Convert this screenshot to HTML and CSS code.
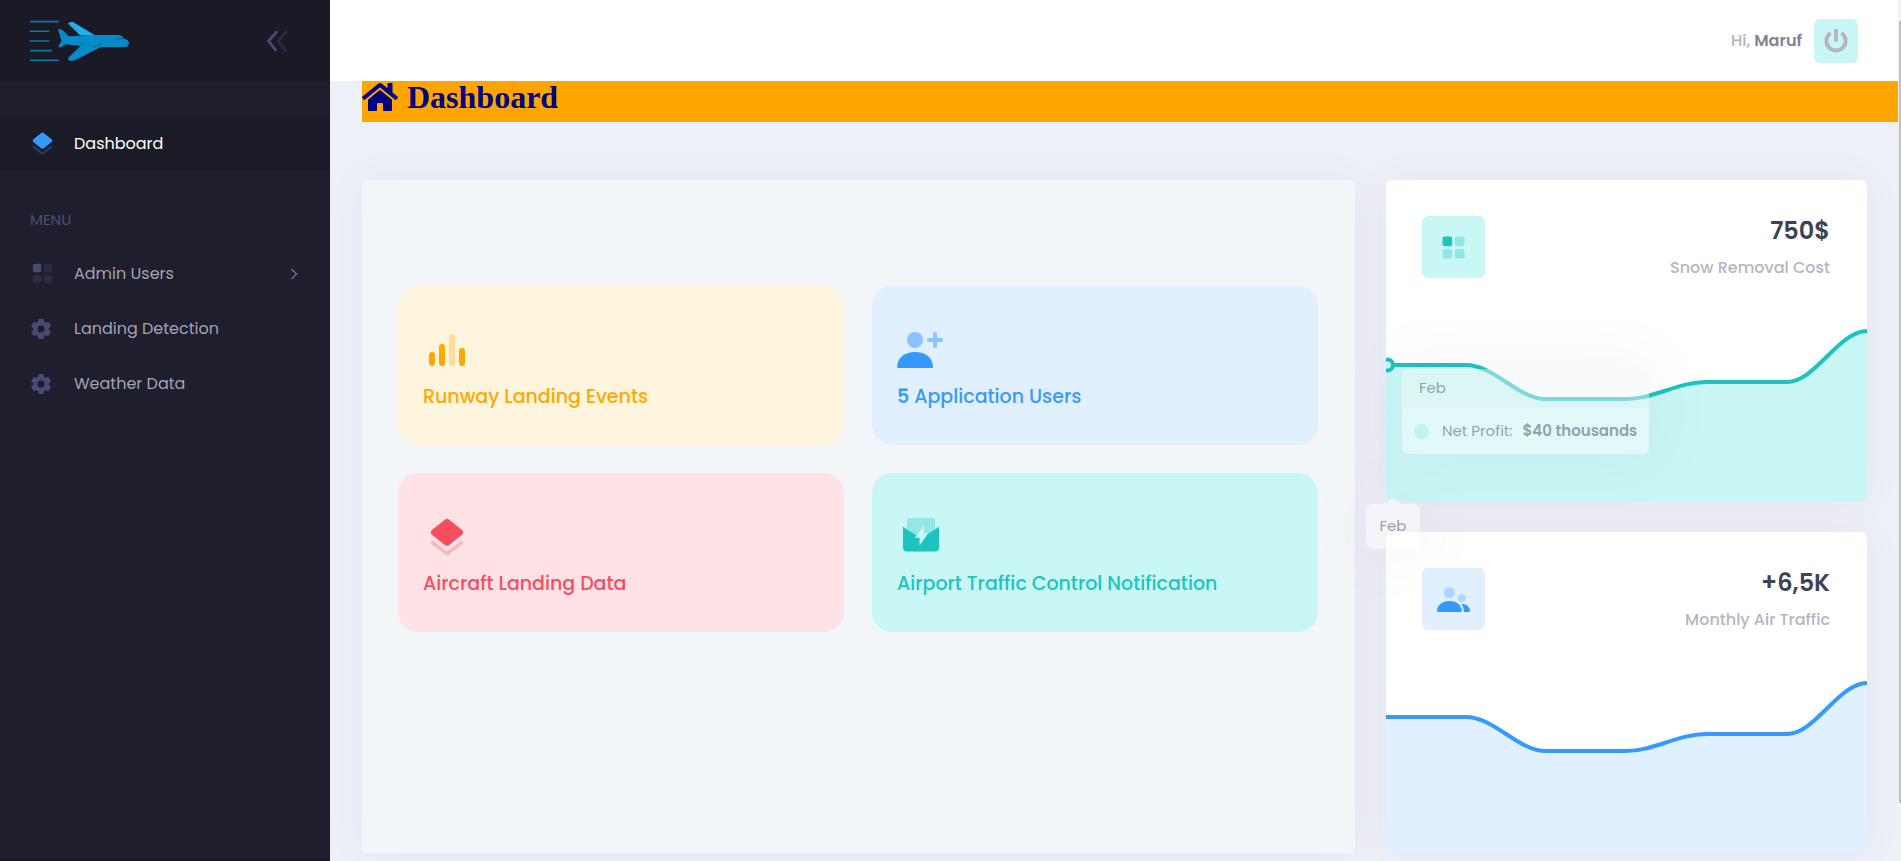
FILE: index.html
```html
<!DOCTYPE html>
<html lang="en">
<head>
<meta charset="utf-8">
<title>Dashboard</title>
<link rel="stylesheet" href="styles.css">
</head>
<body>
<svg class="defs" aria-hidden="true">
  <symbol id="layers" viewBox="0 0 24 24">
    <path d="M12.93 16.07 19.52 10.83C20.17 10.32 20.28 9.37 19.76 8.72 19.69 8.63 19.61 8.55 19.52 8.48L12.93 3.24C12.39 2.81 11.61 2.81 11.07 3.24L4.47 8.48C3.83 9 3.72 9.94 4.23 10.59 4.3 10.68 4.39 10.76 4.47 10.83L11.07 16.07C11.61 16.51 12.39 16.51 12.93 16.07Z"/>
    <path opacity=".3" d="M11.06 18.67 5.34 14.12C4.95 13.81 4.38 13.88 4.07 14.27 3.75 14.67 3.83 15.24 4.22 15.55L11.09 20.8C11.63 21.21 12.37 21.21 12.91 20.8L19.77 15.56C20.17 15.25 20.25 14.68 19.94 14.28 19.63 13.87 19.05 13.8 18.66 14.11L12.92 18.67C12.38 19.1 11.6 19.1 11.06 18.67Z"/>
  </symbol>
  <symbol id="blocks" viewBox="0 0 24 24">
    <rect x="4" y="4" width="7" height="7" rx="1.5"/>
    <g opacity=".3"><rect x="13" y="4" width="7" height="7" rx="1.5"/><rect x="4" y="13" width="7" height="7" rx="1.5"/><rect x="13" y="13" width="7" height="7" rx="1.5"/></g>
  </symbol>
  <symbol id="gear" viewBox="0 0 20 20">
    <circle cx="10" cy="10" r="5.7" fill="none" stroke="currentColor" stroke-width="4.4"/>
    <g id="teeth"><rect x="7.2" y="0" width="5.6" height="4.5" rx="1"/><rect x="7.2" y="15.5" width="5.6" height="4.5" rx="1"/></g>
    <use href="#teeth" transform="rotate(60 10 10)"/>
    <use href="#teeth" transform="rotate(120 10 10)"/>
  </symbol>
</svg>

<div class="layout">
  <aside class="sidebar">
    <div class="brand">
      <svg class="logo" viewBox="0 0 100 42" role="img" aria-label="Airplane">
        <path d="M0 1.6H29M0 11.3H19M0 21H19M0 30.6H22M0 40.3H29" fill="none" stroke="#0b78a8" stroke-width="1.6"/>
        <path fill="#1fb0f0" d="M38 3.5Q38.5 1.5 43 2L65 15.2H50Z"/>
        <path fill="#038cc8" d="M28 9.2Q30.5 8.4 33 10.5L39 16.3 48 16 58 15 89 15Q92 15.3 94 18.5L97.5 20Q101 24.5 96.5 26.9L71 26.9 45 40.3Q40 41.7 38 39.8L38.5 37.5 50.5 26 36 24.3 30.5 27.3 28 27 31.5 20.8Z"/>
        <path d="M85 18.8H93.5M71.5 23 63 27.5M53 22.5 49 26.5" fill="none" stroke="#0a567c" stroke-width=".8"/>
      </svg>
      <button class="collapse" aria-label="Collapse menu">
        <svg width="22" height="22" viewBox="0 0 22 22" fill="none" stroke="#494b74" stroke-width="2.8" stroke-linecap="round" stroke-linejoin="round">
          <path d="M10.5 2 2.5 11 9.7 20"/><path opacity=".35" d="M20 2 12 11 19.2 20"/>
        </svg>
      </button>
    </div>
    <nav class="menu">
      <a class="item active" href="#"><svg class="ico"><use href="#layers"/></svg>Dashboard</a>
      <h2 class="section">MENU</h2>
      <a class="item" href="#"><svg class="ico"><use href="#blocks"/></svg>Admin Users
        <svg class="arrow" width="8" height="12" viewBox="0 0 8 12" fill="none" stroke="#696b90" stroke-width="1.5"><path d="M1.5 1 6.5 6 1.5 11"/></svg></a>
      <a class="item" href="#"><span class="ico"><svg class="gear"><use href="#gear"/></svg></span>Landing Detection</a>
      <a class="item" href="#"><span class="ico"><svg class="gear"><use href="#gear"/></svg></span>Weather Data</a>
    </nav>
  </aside>

  <div class="page">
    <header class="topbar">
      <span class="hello">Hi, <strong>Maruf</strong></span>
      <button class="power" aria-label="Log out">
        <svg width="24" height="24" viewBox="0 0 24 24" fill="none" stroke="#b5b5c3" stroke-width="4" stroke-linecap="round"><path d="M5.2 5.1A9.6 9.6 0 1 0 18.8 5.100M12 1.500V11"/></svg>
      </button>
    </header>

    <main class="main">
      <h1 class="banner">
        <svg width="36" height="32" viewBox="0 0 576 512" fill="currentColor"><path d="M280.37 148.26L96 300.11V464a16 16 0 0 0 16 16l112.06-.29a16 16 0 0 0 15.92-16V368a16 16 0 0 1 16-16h64a16 16 0 0 1 16 16v95.64a16 16 0 0 0 16 16.05L464 480a16 16 0 0 0 16-16V300L295.67 148.26a12.19 12.19 0 0 0-15.3 0zM571.6 251.47L488 182.56V44.05a12 12 0 0 0-12-12h-56a12 12 0 0 0-12 12v72.61L318.47 43a48 48 0 0 0-61 0L4.34 251.47a12 12 0 0 0-1.6 16.9l25.5 31A12 12 0 0 0 45.15 301l235.22-193.74a12.19 12.19 0 0 1 15.3 0L530.9 301a12 12 0 0 0 16.9-1.6l25.5-31a12 12 0 0 0-1.7-16.93z"/></svg>
        Dashboard
      </h1>

      <div class="grid">
        <section class="card overview">
          <div class="tiles">
            <div class="tile warning">
              <svg class="tile-ico" viewBox="0 0 24 24"><rect opacity=".3" x="13" y="4" width="3" height="16" rx="1.5"/><rect x="8" y="9" width="3" height="11" rx="1.5"/><rect x="18" y="11" width="3" height="9" rx="1.5"/><rect x="3" y="13" width="3" height="7" rx="1.5"/></svg>
              <a href="#">Runway Landing Events</a>
            </div>
            <div class="tile primary">
              <svg class="tile-ico" viewBox="0 0 24 24"><g opacity=".5"><circle cx="9" cy="7" r="4"/><path d="M16 7H22M19 4V10" stroke="currentColor" stroke-width="2" stroke-linecap="round"/></g><path d="M0 20.2C.39 15.43 4.26 13 8.98 13 13.77 13 17.7 15.29 18 20.2 18.01 20.4 18 21 17.25 21H.73C.48 21-.02 20.46 0 20.2Z"/></svg>
              <a href="#"><strong>5</strong> Application Users</a>
            </div>
            <div class="tile danger">
              <svg class="tile-ico"><use href="#layers"/></svg>
              <a href="#">Aircraft Landing Data</a>
            </div>
            <div class="tile success">
              <svg class="tile-ico" viewBox="0 0 24 24"><path opacity=".3" d="M5 14V3.5Q5 2.5 6 2.5H18Q19 2.5 19 3.5V14Z"/><path d="M3 6.9 12 12.6 21 6.9V17.2Q21 19.2 19 19.2H5Q3 19.2 3 17.2Z"/><path fill="#c9f7f5" d="M13.5 6.3V10.1H15.6L11.3 16.2V12.4H8.9Z"/></svg>
              <a href="#">Airport Traffic Control Notification</a>
            </div>
          </div>
        </section>

        <div class="stats">
          <section class="card stat">
            <div class="stat-head">
              <span class="symbol success"><svg><use href="#blocks"/></svg></span>
              <div class="figures"><span class="value">750$</span><span class="label">Snow Removal Cost</span></div>
            </div>
            <svg class="chart success" viewBox="0 0 481 185" preserveAspectRatio="none">
              <path class="area" d="M0 49H80C108 49 132 83 160 83H240C268 83 292 66 320 66H401C429 66 453 15 481 15V186H0Z"/>
              <path class="line" d="M0 49H80C108 49 132 83 160 83H240C268 83 292 66 320 66H401C429 66 453 15 481 15"/>
              <circle class="dot" cx="1.5" cy="49" r="5.5"/>
            </svg>
            <div class="tooltip">
              <div class="tip-title">Feb</div>
              <div class="tip-row"><i class="tip-dot"></i><span>Net Profit:</span><strong>$40 thousands</strong></div>
            </div>
            <div class="axis-tip">Feb</div>
          </section>
          <section class="card stat">
            <div class="stat-head">
              <span class="symbol primary"><svg viewBox="0 0 24 24"><g opacity=".3"><circle cx="18" cy="11" r="3"/><circle cx="9" cy="7" r="4"/></g><path d="M17.6 15C21 15.04 23.79 16.76 24 20.4 24 20.55 24 21 23.45 21H19.6C19.6 18.75 18.86 16.67 17.6 15ZM0 20.2C.39 15.43 4.26 13 8.98 13 13.77 13 17.7 15.29 18 20.2 18.01 20.4 18 21 17.25 21H.73C.48 21-.02 20.46 0 20.2Z"/></svg></span>
              <div class="figures"><span class="value">+6,5K</span><span class="label">Monthly Air Traffic</span></div>
            </div>
            <svg class="chart primary" viewBox="0 0 481 185" preserveAspectRatio="none">
              <path class="area" d="M0 49H80C108 49 132 83 160 83H240C268 83 292 66 320 66H401C429 66 453 15 481 15V186H0Z"/>
              <path class="line" d="M0 49H80C108 49 132 83 160 83H240C268 83 292 66 320 66H401C429 66 453 15 481 15"/>
            </svg>
          </section>
        </div>
      </div>
    </main>
  </div>
  <div class="scroll"><div class="thumb"></div></div>
</div>
</body>
</html>
```

FILE: styles.css
```css
* { box-sizing: border-box; }
body {
  margin: 0;
  background: #eef0f8;
  color: #3f4254;
  font: 400 16px/24px Poppins, Inter, "Open Sans", sans-serif;
}
a { color: inherit; text-decoration: none; }
button { border: 0; padding: 0; background: none; display: flex; align-items: center; justify-content: center; }
svg { display: block; fill: currentColor; flex: none; }
svg[fill="none"] { fill: none; }
.defs { position: absolute; width: 0; height: 0; }

.layout { display: flex; min-height: 100vh; }

.sidebar { width: 330px; flex: none; background: #1e1e2d; border-bottom: 2px solid #1a1a27; }
.brand { height: 81px; padding: 0 42px 0 30px; background: #1a1a27; display: flex; align-items: center; justify-content: space-between; }
.logo { width: 100px; height: 42px; }
.menu { padding-top: 35px; color: #a2a3b7; }
.item { display: flex; align-items: center; height: 55px; padding: 0 32px 0 28px; }
.item.active { background: #1b1b28; color: #fff; }
.ico { width: 29px; height: 29px; margin-right: 17px; color: #494b74; display: flex; align-items: center; }
.active .ico { color: #3699ff; }
.gear { width: 20px; height: 20px; margin-left: 3px; }
.arrow { margin-left: auto; }
.section { margin: 0; height: 75px; padding: 37px 0 0 30px; font-size: 15px; font-weight: 400; color: #4c4e6f; }

.page { flex: 1; min-width: 0; }
.topbar { height: 81px; padding-right: 40px; background: #fff; display: flex; align-items: center; justify-content: flex-end; gap: 12px; }
.hello { color: #b5b5c3; font-weight: 500; }
.hello strong { color: #7e8299; font-weight: 600; }
.power { width: 44px; height: 44px; border-radius: 6px; background: #c9f7f5; }

.main { padding-left: 32px; }
.banner { margin: 0; height: 41px; padding-bottom: 9px; background: orange; color: navy; font: 700 32px/32px "Liberation Serif", serif; display: flex; align-items: center; gap: 9px; }
.grid { display: grid; grid-template-columns: repeat(12, 1fr); gap: 31px; padding: 58px 31px 6px 0; }
.card { background: #fff; border-radius: 6px; box-shadow: 0 0 38px rgba(82, 63, 105, .06); }
.overview { grid-column: span 8; background: #f3f6f9; padding: 106px 37px 0 36px; }
.tiles { display: grid; grid-template-columns: 1fr 1fr; gap: 28px; }
.tile { height: 159px; padding: 40px 25px 0; border-radius: 20px; font-size: 19px; font-weight: 500; }
.tile-ico { width: 48px; height: 48px; margin-bottom: 11px; overflow: visible; }
.tile strong { font-weight: 600; }
.warning { background: #fff4de; color: #ffa800; }
.primary { background: #e1f0ff; color: #3699ff; }
.danger { background: #ffe2e5; color: #f64e60; }
.success { background: #c9f7f5; color: #1bc5bd; }

.stats { grid-column: span 4; display: flex; flex-direction: column; gap: 31px; }
.stat { position: relative; }
.stat-head { display: flex; justify-content: space-between; height: 136px; padding: 36px 37px 0 36px; }
.symbol { width: 63px; height: 62px; border-radius: 6px; display: flex; align-items: center; justify-content: center; }
.symbol svg { width: 33px; height: 33px; }
.figures { display: flex; flex-direction: column; text-align: right; }
.value { font-size: 24px; line-height: 30px; font-weight: 600; }
.label { margin-top: 10px; color: #b5b5c3; font-weight: 500; }
.chart { width: 100%; height: 185px; background: none; border-radius: 0 0 6px 6px; overflow: hidden; }
.line, .dot { fill: none; stroke: currentColor; stroke-width: 4; vector-effect: non-scaling-stroke; }
.dot { fill: #c9f7f5; }
.chart.success .area { fill: #c9f7f5; }
.chart.primary .area { fill: #e1f0ff; }

.tooltip, .axis-tip { position: absolute; z-index: 2; background: #fff; border-radius: 6px; opacity: .45; box-shadow: 0 0 60px rgba(82, 63, 105, .12); font-size: 15px; }
.tooltip { left: 16px; top: 189px; }
.tip-title { padding: 7px 17px 8px; background: #f3f6f9; border-radius: 6px 6px 0 0; }
.tip-row { display: flex; align-items: center; height: 46px; padding: 0 12px; }
.tip-dot { width: 15px; height: 15px; border-radius: 50%; background: #aff3ef; margin-right: 13px; }
.tip-row strong { font-weight: 600; margin-left: 10px; }
.axis-tip { left: -20px; top: 324px; width: 54px; padding: 10px 0 11px; text-align: center; }
.axis-tip::before { content: ""; position: absolute; left: 20px; bottom: 100%; border: 7px solid transparent; border-top: 0; border-bottom-color: #fff; }

.scroll { width: 3px; flex: none; background: #f1f1f1; padding: 21px 0 58px 1px; display: flex; }
.thumb { flex: 1; background: #c1c1c1; }
```
